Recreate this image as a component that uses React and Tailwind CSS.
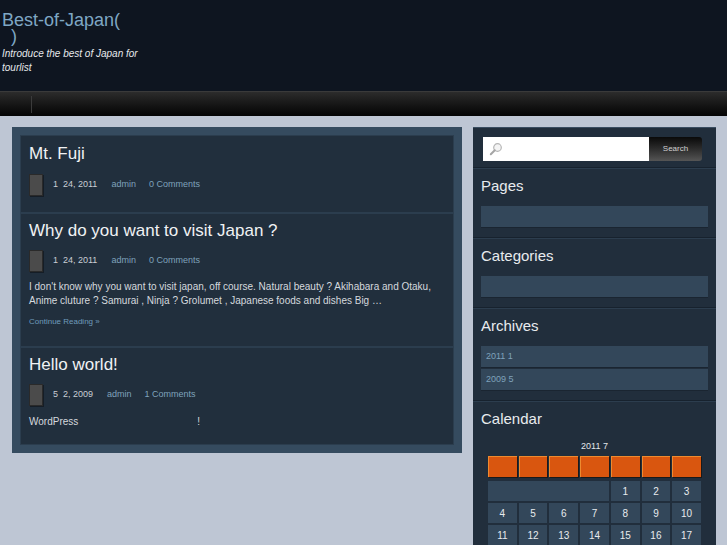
import React from "react";

const posts = [
  {
    title: "Mt. Fuji",
    date: "1  24, 2011",
    comments: "0 Comments",
    pad: "pt-[8px] pb-[16px]",
    metaGap: "mt-[10px]",
  },
  {
    title: "Why do you want to visit Japan ?",
    date: "1  24, 2011",
    comments: "0 Comments",
    excerpt:
      "I don't know why you want to visit japan, off course. Natural beauty ? Akihabara and Otaku, Anime cluture ? Samurai , Ninja ? Grolumet , Japanese foods and dishes Big …",
    more: true,
    pad: "pt-[7px] pb-[18px]",
    metaGap: "mt-[9px]",
  },
  {
    title: "Hello world!",
    date: "5  2, 2009",
    comments: "1 Comments",
    body: true,
    pad: "pt-[7px] pb-[15px]",
    metaGap: "mt-[9px]",
  },
];

const weeks = [
  [null, null, null, null, 1, 2, 3],
  [4, 5, 6, 7, 8, 9, 10],
  [11, 12, 13, 14, 15, 16, 17],
];

const Meta = ({ date, comments, gap }) => (
  <div className={"flex items-center " + gap}>
    <div className="w-[14px] h-[22px] bg-[#4b4b4b] border border-[#2a2a2a] shadow-[1px_1px_0_#151d26]" />
    <span className="ml-[10px] text-[9px] text-[#c9ced4] whitespace-pre">{date}</span>
    <span className="ml-[14px] text-[9px] text-[#7fa2bb]">admin</span>
    <span className="ml-[13px] text-[9px] text-[#7fa2bb]">{comments}</span>
  </div>
);

const Widget = ({ title, children, last }) => (
  <div
    className={
      "px-[8px] pt-[8px] pb-[9px] " +
      (last ? "" : "border-b border-[#17222e] shadow-[0_1px_0_#2c3d4e]")
    }
  >
    <h3 className="text-[15px] text-[#e8ebee] leading-[20px]">{title}</h3>
    <div className="mt-[10px]">{children}</div>
  </div>
);

export default function App() {
  return (
    <div
      className="w-[727px] h-[545px] overflow-hidden bg-[#bec6d4]"
      style={{ fontFamily: '"Liberation Sans", Arial, sans-serif' }}
    >
      {/* Header */}
      <header className="h-[91px] bg-[#0e1520] pt-[12px] pl-[2px]">
        <h1 className="text-[18px] leading-[16px] text-[#7fa7c4] w-[140px]">
          <div>Best-of-Japan(</div>
          <div className="pl-[9px]">)</div>
        </h1>
        <p className="mt-[3px] w-[145px] text-[10px] italic leading-[14px] text-[#e6e9ec]">
          Introduce the best of Japan for tourlist
        </p>
      </header>

      {/* Nav */}
      <nav className="h-[25px] bg-gradient-to-b from-[#2c2c2c] to-[#050505] border-t border-[#3a3a3a] flex items-center">
        <div className="ml-[31px] w-px h-[17px] bg-[#3b3b3b]" />
      </nav>

      {/* Content */}
      <div className="flex pt-[11px] pl-[12px] gap-[11px]">
        <main className="w-[450px] bg-[#354b5f] p-[8px] self-start">
          {posts.map((p) => (
            <article
              key={p.title}
              className={"bg-[#212f3d] border border-[#2b3d4e] px-[8px] " + p.pad}
            >
              <h2 className="text-[17px] leading-[20px] text-[#f0f2f4]">{p.title}</h2>
              <Meta date={p.date} comments={p.comments} gap={p.metaGap} />
              {p.excerpt && (
                <p className="mt-[8px] text-[10px] leading-[14px] text-[#d5d9de]">
                  {p.excerpt}
                </p>
              )}
              {p.more && (
                <p className="mt-[8px] text-[8px] leading-[12px] text-[#6f9bbb]">Continue Reading »</p>
              )}
              {p.body && (
                <p className="mt-[8px] text-[10px] leading-[15px] text-[#d5d9de]">
                  WordPress
                  <span className="pl-[119px]">!</span>
                </p>
              )}
            </article>
          ))}
        </main>

        <aside className="w-[243px] h-[420px] bg-[#212e3c] border-t border-[#3a4d60]">
          {/* Search */}
          <div className="px-[10px] pt-[9px] pb-[6px] border-b border-[#17222e] shadow-[0_1px_0_#2c3d4e]">
            <div className="flex h-[24px]">
              <div className="w-[166px] bg-white flex items-center pl-[6px]">
                <svg width="14" height="14" viewBox="0 0 14 14">
                  <circle cx="8.5" cy="5.5" r="3.8" fill="#f4f4f4" stroke="#b5b5b5" strokeWidth="1.2" />
                  <line x1="5.8" y1="8.2" x2="1.8" y2="12.2" stroke="#a5a5a5" strokeWidth="2" strokeLinecap="round" />
                </svg>
              </div>
              <button className="w-[53px] rounded-r-[3px] bg-gradient-to-b from-[#0a0a0a] to-[#555555] text-[8px] text-[#d0d0d0]">
                Search
              </button>
            </div>
          </div>

          <Widget title="Pages">
            <div className="h-[22px] bg-[#33475a] border-b border-[#1a2531]" />
          </Widget>

          <Widget title="Categories">
            <div className="h-[22px] bg-[#33475a] border-b border-[#1a2531]" />
          </Widget>

          <Widget title="Archives">
            <div className="flex flex-col gap-px">
              {["2011 1", "2009 5"].map((a) => (
                <div
                  key={a}
                  className="h-[22px] bg-[#33475a] border-b border-[#1a2531] flex items-center pl-[5px] text-[9px] text-[#7fa2bb]"
                >
                  {a}
                </div>
              ))}
            </div>
          </Widget>

          <Widget title="Calendar" last>
            <div className="px-[7px] pt-px">
              <div className="text-center text-[9px] text-[#e3e6ea] leading-[12px]">2011 7</div>
              <div className="grid grid-cols-7 gap-[2px] mt-[4px]">
                {Array.from({ length: 7 }).map((_, i) => (
                  <div
                    key={i}
                    className="h-[21px] bg-[#d9560f] border-t border-l border-[#ee8a2f] shadow-[1px_1px_0_#1a1a1a]"
                  />
                ))}
              </div>
              {weeks.map((w, wi) => (
                <div
                  key={wi}
                  className={"grid grid-cols-7 gap-[2px] " + (wi === 0 ? "mt-[4px]" : "mt-[2px]")}
                >
                  {wi === 0 ? (
                    <div className="col-span-4 h-[20px] bg-[#33475a]" />
                  ) : null}
                  {w
                    .filter((d) => d !== null)
                    .map((d) => (
                      <div
                        key={d}
                        className="h-[20px] bg-[#33475a] flex items-center justify-center text-[10px] text-[#e8ebee]"
                      >
                        {d}
                      </div>
                    ))}
                </div>
              ))}
            </div>
          </Widget>
        </aside>
      </div>
    </div>
  );
}
